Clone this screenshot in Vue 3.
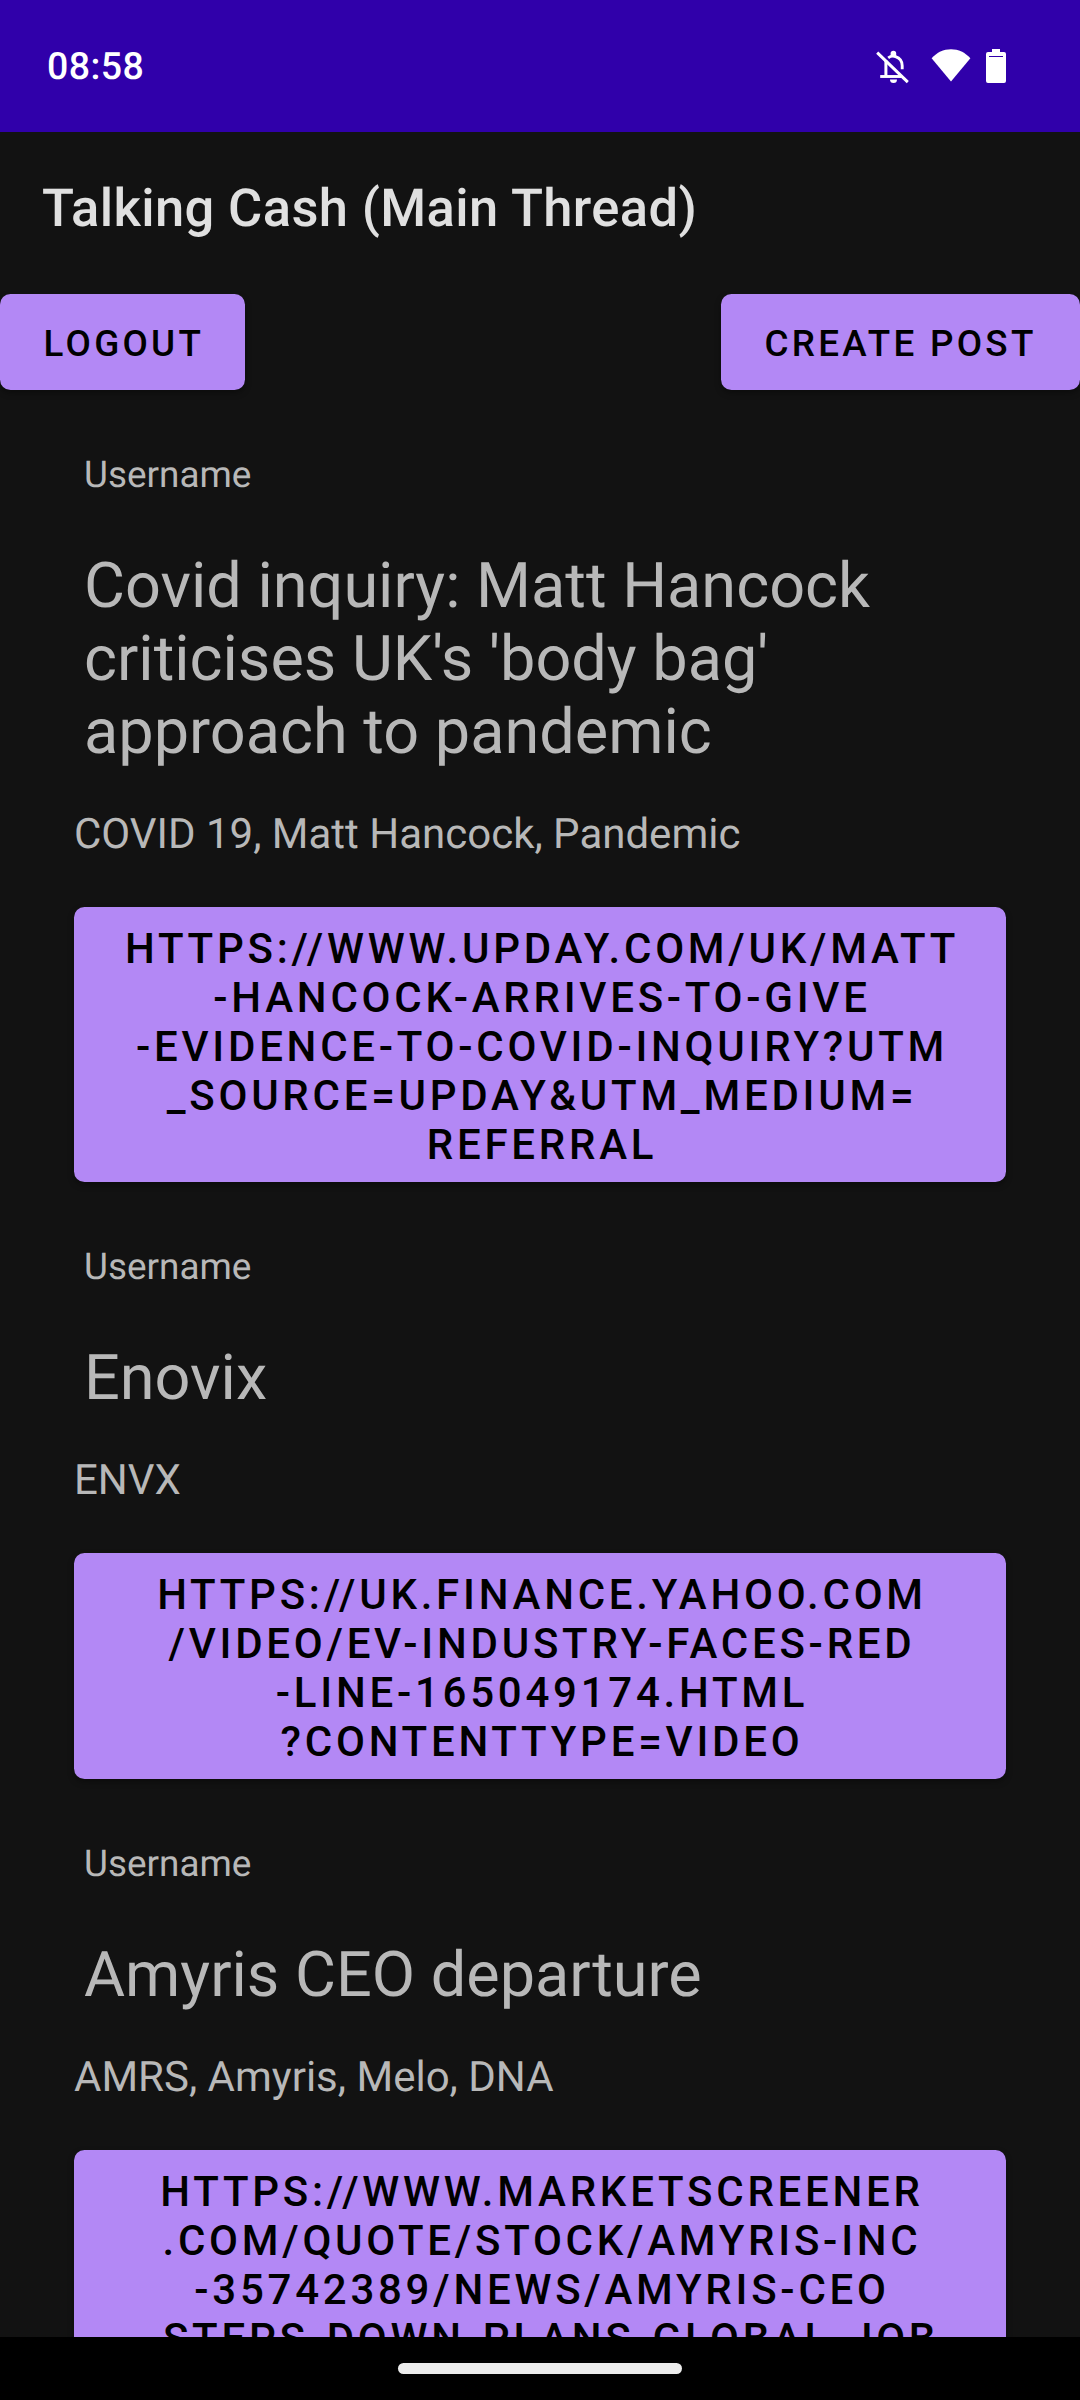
<script setup>
const posts = [
  {
    author: 'Username',
    title: ["Covid inquiry: Matt Hancock", "criticises UK's 'body bag'", 'approach to pandemic'],
    tags: 'COVID 19, Matt Hancock, Pandemic',
    link: [
      'HTTPS://WWW.UPDAY.COM/UK/MATT',
      '-HANCOCK-ARRIVES-TO-GIVE',
      '-EVIDENCE-TO-COVID-INQUIRY?UTM',
      '_SOURCE=UPDAY&UTM_MEDIUM=',
      'REFERRAL',
    ],
  },
  {
    author: 'Username',
    title: ['Enovix'],
    tags: 'ENVX',
    link: [
      'HTTPS://UK.FINANCE.YAHOO.COM',
      '/VIDEO/EV-INDUSTRY-FACES-RED',
      '-LINE-165049174.HTML',
      '?CONTENTTYPE=VIDEO',
    ],
  },
  {
    author: 'Username',
    title: ['Amyris CEO departure'],
    tags: 'AMRS, Amyris, Melo, DNA',
    link: [
      'HTTPS://WWW.MARKETSCREENER',
      '.COM/QUOTE/STOCK/AMYRIS-INC',
      '-35742389/NEWS/AMYRIS-CEO',
      '-STEPS-DOWN-PLANS-GLOBAL-JOB',
    ],
  },
]
</script>

<template>
  <div class="screen">
    <header class="status">
      <span class="clock">08:58</span>
      <div class="icons">
        <svg class="bell" width="34" height="34" viewBox="0 0 34 34" fill="none" stroke="#fff">
          <path d="M12.2 7.8C14.2 6.3 17 5.8 19.5 6.6C23.5 7.9 26.2 11.4 26.2 15.7V19.2" stroke-width="2.9" />
          <path d="M9.9 10.5V26.5" stroke-width="3" />
          <path d="M4.2 26.5H25.5" stroke-width="2.9" />
          <path d="M1.2 2.6L31.8 32.2" stroke-width="3" />
          <path d="M14.6 6V3.6a2.8 2.8 0 0 1 5.6 0V6z" fill="#fff" stroke="none" />
          <path d="M14 29.4h7a3.5 3.5 0 0 1-7 0z" fill="#fff" stroke="none" />
        </svg>
        <svg class="wifi" width="40" height="33" viewBox="0 0 40 33">
          <path d="M20 32.6L.6 9.2C5.900 3.400 12.500.2 20 .2S34.100 3.400 39.400 9.200z" fill="#fff" />
        </svg>
        <svg class="battery" width="20" height="34" viewBox="0 0 20 34">
          <path
            d="M6 0h8v3h4a2 2 0 0 1 2 2v27a2 2 0 0 1-2 2H2a2 2 0 0 1-2-2V5a2 2 0 0 1 2-2h4zM3 7v1.100h14V7z"
            fill="#fff"
            fill-rule="evenodd"
          />
        </svg>
      </div>
    </header>

    <h1 class="app-title">Talking Cash (Main Thread)</h1>

    <div class="actions">
      <button class="btn logout">LOGOUT</button>
      <button class="btn create">CREATE POST</button>
    </div>

    <main class="feed">
      <article v-for="(post, i) in posts" :key="i" class="post">
        <div class="author">{{ post.author }}</div>
        <h2 class="headline">
          <span v-for="line in post.title" :key="line" class="line">{{ line }}</span>
        </h2>
        <div class="tags">{{ post.tags }}</div>
        <button class="link">
          <span v-for="line in post.link" :key="line" class="line">{{ line }}</span>
        </button>
      </article>
    </main>

    <footer class="nav"><div class="handle"></div></footer>
  </div>
</template>

<style>
body {
  margin: 0;
  background: #121212;
}
</style>

<style scoped>
.screen {
  width: 1080px;
  height: 2400px;
  display: flex;
  flex-direction: column;
  overflow: hidden;
  background: #121212;
  color: #b8b8b8;
  font-family: Roboto, 'Liberation Sans', sans-serif;
  text-rendering: geometricPrecision;
}
.status {
  flex: none;
  height: 132px;
  box-sizing: border-box;
  padding: 0 74px 0 47px;
  display: flex;
  align-items: center;
  justify-content: space-between;
  background: #3000aa;
  color: #fff;
}
.clock {
  padding-top: 2px;
  font-size: 37.5px;
  line-height: 44px;
  font-weight: 500;
  letter-spacing: 0.4px;
}
.icons {
  display: flex;
  align-items: flex-start;
}
.wifi {
  margin-left: 21px;
}
.battery {
  margin-left: 15px;
}
.bell {
  margin-top: 1px;
}
.app-title {
  flex: none;
  margin: 45px 0 55px 42px;
  font-size: 52.5px;
  line-height: 62px;
  font-weight: 500;
  letter-spacing: 0.0072em;
  color: #e0e0e0;
}
.actions {
  flex: none;
  display: flex;
  justify-content: space-between;
}
button {
  border: 0;
  border-radius: 10.5px;
  background: #b388f5;
  color: #000;
  font-family: inherit;
  font-weight: 500;
  letter-spacing: 0.0892857em;
  box-shadow: 0 3px 6px rgba(0, 0, 0, 0.35);
}
.btn {
  height: 96px;
  padding: 28px 0 25px 43.5px;
  font-size: 36.8px;
  line-height: 43px;
  text-align: left;
  white-space: nowrap;
}
.logout {
  width: 245px;
}
.create {
  width: 359px;
}
.feed {
  flex: 1;
  min-height: 0;
  overflow: hidden;
}
.post {
  display: flex;
  flex-direction: column;
  padding: 64px 74px 0;
}
.author {
  margin-left: 10px;
  font-size: 36.9px;
  line-height: 43px;
}
.headline {
  margin: 53px 0 41px 10px;
  font-size: 63px;
  line-height: 73px;
  font-weight: 400;
}
.line {
  display: block;
  white-space: nowrap;
}
.tags {
  font-size: 42px;
  line-height: 49px;
}
.link {
  margin-top: 48px;
  padding: 17px 40px 13px 44px;
  font-size: 42px;
  line-height: 49px;
  text-align: center;
}
.nav {
  flex: none;
  height: 63px;
  display: flex;
  align-items: center;
  justify-content: center;
  background: #000;
}
.handle {
  width: 284px;
  height: 11px;
  border-radius: 6px;
  background: #ececec;
}
</style>
